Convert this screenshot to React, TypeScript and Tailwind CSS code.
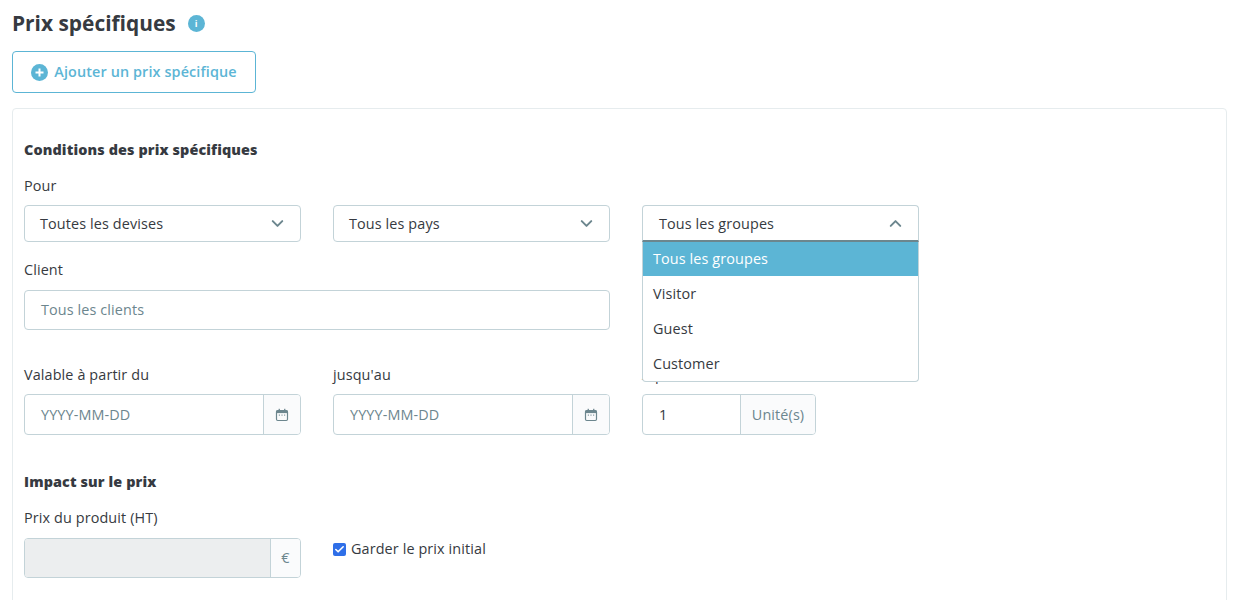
import { Check, ChevronDown, ChevronUp } from 'lucide-react'

function CalendarIcon() {
  return (
    <svg width="14" height="14" viewBox="0 0 14 14" fill="none" className="text-[#6c868e]">
      <rect x="1.5" y="2.5" width="11" height="10" rx="1.2" stroke="currentColor" strokeWidth="1.2" />
      <rect x="1.5" y="2.5" width="11" height="2.6" fill="currentColor" />
      <rect x="3.6" y="0.8" width="1.3" height="2.2" fill="currentColor" />
      <rect x="9.1" y="0.8" width="1.3" height="2.2" fill="currentColor" />
      <rect x="3.8" y="6.6" width="1.2" height="1" fill="currentColor" />
      <rect x="6.4" y="6.6" width="1.2" height="1" fill="currentColor" />
      <rect x="9" y="6.6" width="1.2" height="1" fill="currentColor" />
    </svg>
  )
}

function Select({ label }: { label: string }) {
  return (
    <div className="flex h-[37px] items-center justify-between rounded border border-[#c3d3d8] bg-white pl-[15px] pr-[13px] text-[#363a41]">
      <span>{label}</span>
      <ChevronDown size={19} strokeWidth={2.5} className="text-[#6c868e]" />
    </div>
  )
}

function DateField({ label }: { label: string }) {
  return (
    <div>
      <label className="block h-5 leading-5">{label}</label>
      <div className="mt-[9px] flex h-[41px] overflow-hidden rounded border border-[#c3d3d8] bg-white">
        <span className="flex flex-1 items-center pl-4 text-[#6c868e]">YYYY-MM-DD</span>
        <span className="flex w-[37px] items-center justify-center border-l border-[#c3d3d8] bg-[#fafbfc]">
          <CalendarIcon />
        </span>
      </div>
    </div>
  )
}

export default function App() {
  return (
    <div className="h-[600px] overflow-hidden bg-white px-3 pt-2 text-[14.4px] leading-5 tracking-[0.008em] text-[#363a41] [font-family:'Open_Sans',sans-serif]">
      <div className="flex h-[30px] items-center">
        <h2 className="text-[20.9px] font-bold leading-[30px] tracking-normal">Prix spécifiques</h2>
        <span className="ml-[12px] flex h-[17px] w-[17px] items-center justify-center rounded-full bg-[#5cb5d5] text-[9px] font-bold leading-none text-white">
          i
        </span>
      </div>

      <button className="mt-[13px] flex h-[42px] w-[244px] items-center justify-center gap-[6px] rounded border border-[#5cb5d5] bg-white text-[14.4px] font-semibold text-[#5cb5d5]">
        <svg width="17" height="17" viewBox="0 0 17 17">
          <circle cx="8.5" cy="8.5" r="8.5" fill="#5cb5d5" />
          <path d="M8.5 4.5v8M4.5 8.5h8" stroke="#fff" strokeWidth="2" />
        </svg>
        Ajouter un prix spécifique
      </button>

      <div className="mt-[15px] h-[600px] w-[1215px] rounded border border-[#e6ecee] px-[11px] pt-[31px]">
        <h3 className="h-5 font-extrabold leading-5">Conditions des prix spécifiques</h3>
        <label className="mt-4 block h-5 leading-5">Pour</label>

        <div className="mt-[9px] grid w-[895px] grid-cols-[277px_277px_277px] gap-x-8">
          <Select label="Toutes les devises" />
          <Select label="Tous les pays" />
          <div className="relative z-10">
            <div className="flex h-[37px] items-center justify-between rounded-t border border-b-2 border-[#c3d3d8] border-b-[#6c868e] bg-white pl-4 pr-[13px] pt-px">
              <span>Tous les groupes</span>
              <ChevronUp size={19} strokeWidth={2.5} className="text-[#6c868e]" />
            </div>
            <ul className="absolute left-0 top-[37px] w-full overflow-hidden rounded-b border border-t-0 border-[#c3d3d8] bg-white">
              <li className="flex h-[34px] items-center bg-[#5cb5d5] pl-[10px] text-white">Tous les groupes</li>
              <li className="flex h-[35px] items-center pl-[10px]">Visitor</li>
              <li className="flex h-[35px] items-center pl-[10px]">Guest</li>
              <li className="flex h-[35px] items-center pl-[10px]">Customer</li>
            </ul>
          </div>
        </div>

        <label className="mt-[18px] block h-5 leading-5">Client</label>
        <div className="mt-[10px] flex h-10 w-[586px] items-center rounded border border-[#c3d3d8] pl-4 text-[#6c868e]">
          Tous les clients
        </div>

        <div className="mt-[35px] grid w-[895px] grid-cols-[277px_277px_277px] gap-x-8">
          <DateField label="Valable à partir du" />
          <DateField label="jusqu'au" />
          <div>
            <label className="block h-5 leading-5">À partir de</label>
            <div className="mt-[9px] flex h-[41px] w-[174px] overflow-hidden rounded border border-[#c3d3d8]">
              <span className="flex flex-1 items-center pl-4">1</span>
              <span className="flex w-[75px] items-center justify-center border-l border-[#c3d3d8] bg-[#fafbfc] text-[#6c868e]">
                Unité(s)
              </span>
            </div>
          </div>
        </div>

        <h3 className="mt-[37px] h-5 font-extrabold leading-5">Impact sur le prix</h3>
        <label className="mt-4 block h-5 leading-5">Prix du produit (HT)</label>
        <div className="mt-[10px] grid w-[895px] grid-cols-[277px_277px_277px] gap-x-8">
          <div className="flex h-10 overflow-hidden rounded border border-[#c3d3d8]">
            <span className="flex-1 bg-[#eceeef]" />
            <span className="flex w-[30px] items-center justify-center border-l border-[#c3d3d8] bg-[#fafbfc] text-[#6c868e]">
              €
            </span>
          </div>
          <div className="flex h-5 items-center gap-[5px] pt-[2px]">
            <span className="flex h-[13px] w-[13px] items-center justify-center rounded-[2px] bg-[#2f6fe8]">
              <Check size={11} strokeWidth={3.5} className="text-white" />
            </span>
            <span>Garder le prix initial</span>
          </div>
        </div>
      </div>
    </div>
  )
}
